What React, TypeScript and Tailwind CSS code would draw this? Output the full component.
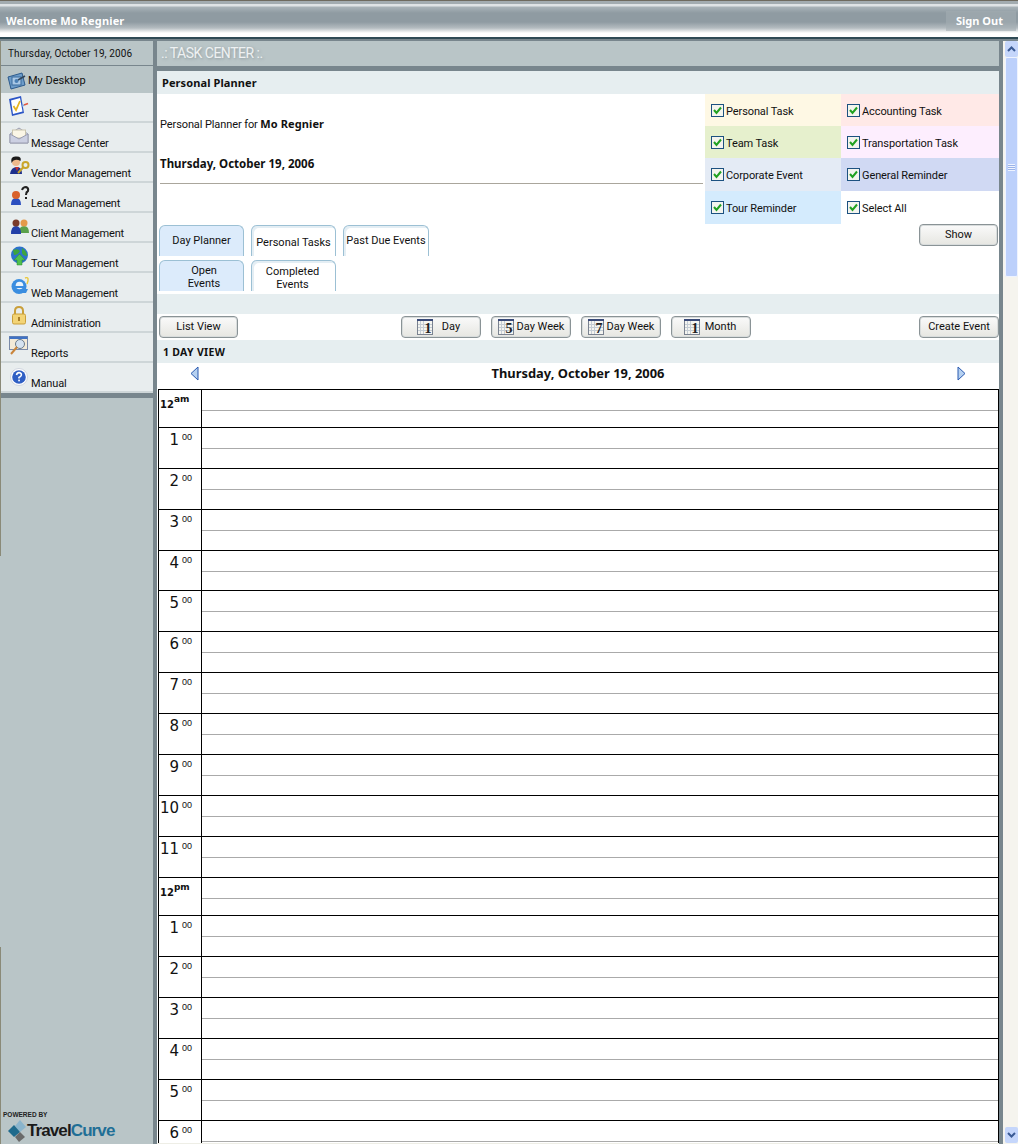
import React from 'react';

// Icons for the left menu
const DesktopIcon = () => (
  <svg width="20" height="20" viewBox="0 0 20 20">
    <path d="M1 6 L15 2 L18 14 L4 18 Z" fill="#6d9cc9" stroke="#2c5a8c" />
    <rect x="5" y="6" width="9" height="8" fill="#a9c8e6" stroke="#3a6a9c" />
    <circle cx="9.5" cy="10" r="2" fill="#4a7fb4" />
    <path d="M11 9 L18 5" stroke="#33465a" strokeWidth="1.5" />
  </svg>
);
const TaskIcon = () => (
  <svg width="22" height="22" viewBox="0 0 22 22">
    <path d="M1 3 L13 0 L16 17 L4 20 Z" fill="#2b55c6" />
    <path d="M3 4.5 L12 2 L14.5 15.5 L5 18 Z" fill="#fff" />
    <path d="M5.5 10 L8 14 L12 5" fill="none" stroke="#e6b422" strokeWidth="1.8" />
    <path d="M16 9 L20 7.5" stroke="#e2583e" strokeWidth="1.5" />
    <path d="M14 10 L16 9" stroke="#7fa8e0" strokeWidth="1.5" />
  </svg>
);
const MailIcon = () => (
  <svg width="20" height="18" viewBox="0 0 20 18">
    <path d="M1 7 L10 1 L19 7 V16 H1 Z" fill="#dfe2ea" stroke="#9a9db0" />
    <rect x="3.5" y="3" width="13" height="8" fill="#fbf6e6" stroke="#c9c4ae" />
    <path d="M1 7 L10 12 L19 7 V16 H1 Z" fill="#ccd0e2" stroke="#9a9db0" />
  </svg>
);
const VendorIcon = () => (
  <svg width="21" height="20" viewBox="0 0 21 20">
    <path d="M1 18 Q2 11 8 11 Q13 11 13 18 Z" fill="#1c2f8c" />
    <path d="M6 11 L8 15 L10 11 Z" fill="#c23030" />
    <circle cx="7" cy="6" r="4" fill="#eeb98c" />
    <path d="M2.5 7 Q1 0 7 0.5 Q13 0 11.5 5 Q8 3 6 4 Q4 4 2.5 7 Z" fill="#1a1a1a" />
    <circle cx="16.5" cy="9" r="3" fill="none" stroke="#c9a52a" strokeWidth="2" />
    <path d="M14.5 11 L9 17" stroke="#c9a52a" strokeWidth="2" />
  </svg>
);
const LeadIcon = () => (
  <svg width="20" height="20" viewBox="0 0 20 20">
    <path d="M1 19 Q1 12 6 12 Q11 12 11 19 Z" fill="#2b4fc0" />
    <circle cx="6" cy="9" r="4" fill="#d9622c" />
    <path d="M12 4 Q13 1 16 1 Q19 2 18 5 Q16 6 16 9" fill="none" stroke="#222" strokeWidth="2" />
    <rect x="15" y="11" width="2" height="2" fill="#222" />
  </svg>
);
const ClientIcon = () => (
  <svg width="20" height="16" viewBox="0 0 20 16">
    <path d="M9 15 Q9 8 14 8 Q19 8 19 15 Z" fill="#5aa04a" />
    <circle cx="14" cy="5" r="3.5" fill="#e39a4a" />
    <path d="M1 16 Q1 8 6 8 Q11 8 11 16 Z" fill="#2340a8" />
    <circle cx="6" cy="5" r="3.5" fill="#7a3a2a" />
  </svg>
);
const GlobeIcon = () => (
  <svg width="19" height="20" viewBox="0 0 19 20">
    <circle cx="9.5" cy="9" r="8.5" fill="#2d72cc" />
    <path d="M3 4 Q8 2 10 5 Q8 9 4 9 Z M12 2 Q17 5 17 10 Q13 10 12 7 Z" fill="#3da43d" />
    <path d="M9.5 8 L15 14 H12 V19 H7 V14 H4 Z" fill="#4fc04f" stroke="#2a8a2a" strokeWidth="0.5" />
  </svg>
);
const IeIcon = () => (
  <svg width="20" height="19" viewBox="0 0 20 19">
    <path d="M15 2 Q20 0 17 8" fill="none" stroke="#e9c83a" strokeWidth="1.4" />
    <circle cx="9" cy="10.5" r="7.5" fill="#3b8ee0" />
    <circle cx="9.5" cy="9.5" r="3.8" fill="#eaf4fc" />
    <rect x="4" y="10" width="12" height="2" fill="#3b8ee0" />
    <path d="M11 13 L18 13 L16 17 L9 17 Z" fill="#3b8ee0" />
  </svg>
);
const LockIcon = () => (
  <svg width="16" height="19" viewBox="0 0 16 19">
    <path d="M4 9 V5 Q4 1 8 1 Q12 1 12 5 V9" fill="none" stroke="#c99f3a" strokeWidth="2" />
    <rect x="1.5" y="8" width="13" height="10" rx="1.5" fill="#f3d476" stroke="#c99f3a" />
    <rect x="7" y="11" width="2" height="4" fill="#a87f2a" />
  </svg>
);
const ReportIcon = () => (
  <svg width="20" height="19" viewBox="0 0 20 19">
    <rect x="0.5" y="0.5" width="18" height="13" fill="#f3ead8" stroke="#7a8aa8" />
    <rect x="0.5" y="0.5" width="18" height="2.5" fill="#3f72c4" />
    <circle cx="11" cy="8" r="4.5" fill="#d5e2f0" stroke="#6a7a8a" />
    <path d="M8 11 L2 18" stroke="#c9843a" strokeWidth="2" />
  </svg>
);
const HelpIcon = () => (
  <svg width="18" height="18" viewBox="0 0 18 18">
    <circle cx="9" cy="9" r="8.5" fill="#fff" stroke="#cfd4de" />
    <circle cx="9" cy="9" r="6.8" fill="#2f5fc4" />
    <path d="M6.5 7 Q7 4.5 9.2 4.6 Q11.8 5 11.3 7.2 Q10.8 8.4 9 9.4 V10.6" fill="none" stroke="#fff" strokeWidth="1.6" />
    <rect x="8.2" y="11.6" width="1.7" height="1.7" fill="#fff" />
  </svg>
);

const menu = [
  { label: 'Task Center', icon: <TaskIcon />, pad: 'pl-[7px] pt-[3px]', gap: 'ml-[2px]' },
  { label: 'Message Center', icon: <MailIcon />, pad: 'pl-[8px] pt-[4px]', gap: 'ml-[2px]' },
  { label: 'Vendor Management', icon: <VendorIcon />, pad: 'pl-[8px] pt-[3px]', gap: 'ml-[1px]' },
  { label: 'Lead Management', icon: <LeadIcon />, pad: 'pl-[9px] pt-[3px]', gap: 'ml-[1px]' },
  { label: 'Client Management', icon: <ClientIcon />, pad: 'pl-[9px] pt-[5px]', gap: 'ml-[1px]' },
  { label: 'Tour Management', icon: <GlobeIcon />, pad: 'pl-[9px] pt-[3px]', gap: 'ml-[2px]' },
  { label: 'Web Management', icon: <IeIcon />, pad: 'pl-[9px] pt-[3px]', gap: 'ml-[1px]' },
  { label: 'Administration', icon: <LockIcon />, pad: 'pl-[10px] pt-[3px]', gap: 'ml-[4px]' },
  { label: 'Reports', icon: <ReportIcon />, pad: 'pl-[8px] pt-[3px]', gap: 'ml-[2px]' },
  { label: 'Manual', icon: <HelpIcon />, pad: 'pl-[9px] pt-[5px]', gap: 'ml-[3px]' },
];

const Check = ({ label, bg }: { label: string; bg: string }) => (
  <div className={`flex h-full items-start pl-[6px] ${bg}`}>
    <span className="mr-[2px] mt-[10px] flex h-[13px] w-[13px] shrink-0 items-center justify-center border border-[#1c5180] bg-[#f4f4ee]">
      <svg width="9" height="9" viewBox="0 0 9 9">
        <path d="M1 4 L3.5 7 L8 1.5" fill="none" stroke="#21a121" strokeWidth="2" />
      </svg>
    </span>
    <span className="mt-[10px] tracking-[-0.1px]">{label}</span>
  </div>
);

const Tab = ({ children, w, active, pt }: { children: React.ReactNode; w: string; active?: boolean; pt: string }) => (
  <div className={`${w} h-[31px] rounded-t-[6px] border-x border-t border-[#9cc0d4] text-center leading-[13px] ${pt} ${active ? 'bg-[#dcebfb]' : 'bg-white shadow-[inset_2px_2px_0_#e4eef4]'}`}>
    {children}
  </div>
);

const Btn = ({ children, w, extra = '' }: { children: React.ReactNode; w: string; extra?: string }) => (
  <div className={`${w} ${extra} flex h-[22px] items-center justify-center rounded-[4px] border border-[#8a9396] bg-[linear-gradient(#fafafa,#e6e6e1)] shadow-[inset_0_0_0_1px_#d8dcdc]`}>
    {children}
  </div>
);

const CalIcon = ({ n }: { n: string }) => (
  <svg width="16" height="16" viewBox="0 0 16 16" className="shrink-0">
    <rect x="0.5" y="0.5" width="15" height="15" fill="#f4f4f0" stroke="#7a8290" />
    <rect x="0" y="0" width="16" height="2" fill="#3a4a78" />
    <path d="M1 5.5 H15 M1 8.5 H15 M1 11.5 H15 M3.5 2 V15 M6.5 2 V15" stroke="#c4ccd4" fill="none" />
    <text x="11" y="14" textAnchor="middle" fontFamily="Liberation Serif, serif" fontSize="14" fontWeight="700" fill="#222">{n}</text>
  </svg>
);

const CalBtn = ({ n, label, iconGap, extra }: { n: string; label: string; iconGap: string; extra?: string }) => (
  <Btn w="w-[80px]" extra={extra}>
    <CalIcon n={n} />
    <span className={iconGap}>{label}</span>
  </Btn>
);

const hours = [
  { h: '12', sup: 'am', height: 'h-[38px]' },
  { h: '1', sup: '00', height: 'h-[41px]' },
  { h: '2', sup: '00', height: 'h-[41px]' },
  { h: '3', sup: '00', height: 'h-[41px]' },
  { h: '4', sup: '00', height: 'h-[40px]' },
  { h: '5', sup: '00', height: 'h-[41px]' },
  { h: '6', sup: '00', height: 'h-[41px]' },
  { h: '7', sup: '00', height: 'h-[41px]' },
  { h: '8', sup: '00', height: 'h-[41px]' },
  { h: '9', sup: '00', height: 'h-[41px]' },
  { h: '10', sup: '00', height: 'h-[41px]' },
  { h: '11', sup: '00', height: 'h-[41px]' },
  { h: '12', sup: 'pm', height: 'h-[38px]' },
  { h: '1', sup: '00', height: 'h-[41px]' },
  { h: '2', sup: '00', height: 'h-[41px]' },
  { h: '3', sup: '00', height: 'h-[41px]' },
  { h: '4', sup: '00', height: 'h-[41px]' },
  { h: '5', sup: '00', height: 'h-[41px]' },
  { h: '6', sup: '00', height: 'h-[41px]' },
];

const HourRow = ({ h, sup, height }: { h: string; sup: string; height: string }) => (
  <div className={`flex ${height} shrink-0 border-t border-black`}>
    {sup === '00' ? (
      <div className="flex w-[43px] shrink-0 justify-end border-r border-black pr-[9px] pt-[5px] font-['DejaVu_Sans',sans-serif] leading-none">
        <span className="text-[15px]">{h}</span>
        <span className="ml-[3px] font-['Liberation_Sans',sans-serif] text-[9px]">{sup}</span>
      </div>
    ) : (
      <div className="flex w-[43px] shrink-0 border-r border-black pl-[1px] pt-[5px] font-['DejaVu_Sans',sans-serif] font-bold leading-none">
        <span className="mt-[5px] text-[10px]">{h}</span>
        <span className="text-[9px]">{sup}</span>
      </div>
    )}
    <div className="flex-1">
      <div className="h-[21px] border-b border-[#aaaaaa]" />
    </div>
  </div>
);

export default function App() {
  return (
    <div className="flex h-[1144px] w-[1018px] flex-col overflow-hidden bg-[#78868d] font-['Roboto',sans-serif] text-[11px] text-[#111]">
      {/* top bar */}
      <div className="flex h-[39px] shrink-0 items-center justify-between border-b-2 border-[#2f4a55] bg-[linear-gradient(#6e6a5e_0,#6e6a5e_1px,#a3acb0_1px,#a3acb0_4px,#dfe3e5_4px,#dfe3e5_6px,#a9b3b8_7px,#8f9ba2_13px,#8f9ba2_22px,#b4bcc0_28px,#ffffff_33px,#ffffff_37px)] pl-[6px] font-['Noto_Sans',sans-serif] font-bold text-white">
        <span className="mt-[5px] text-[11px] tracking-[0.15px]">Welcome Mo Regnier</span>
        <span className="mr-[2px] mt-[5px] flex h-[20px] w-[70px] items-center bg-[#a3adb2]/60 pl-[10px] text-[11px]">Sign Out</span>
      </div>

      <div className="flex min-h-0 flex-1 pt-[2px]">
        {/* left menu */}
        <div className="flex w-px shrink-0 flex-col">
          <div className="h-[515px] bg-[#8a8a78]" />
          <div className="h-[391px] bg-[#b9c5c7]" />
          <div className="flex-1 bg-[#8a8a78]" />
        </div>
        <div className="flex w-[152px] shrink-0 flex-col bg-[#b9c5c7]">
          <div className="flex h-[25px] shrink-0 items-center border-b border-[#78868d] pl-[7px] text-[10px] tracking-[0.12px]">Thursday, October 19, 2006</div>
          <div className="flex h-[27px] shrink-0 items-center gap-[1px] pl-[6px]">
            <div className="mt-[2px]">
              <DesktopIcon />
            </div>
            <span className="mt-[4px] text-[11px]">My Desktop</span>
          </div>
          {menu.map((m) => (
            <div key={m.label} className={`flex h-[30px] shrink-0 border-b-2 border-[#ced6d8] bg-[#e8edee] ${m.pad}`}>
              <div className="self-start">{m.icon}</div>
              <span className={`mt-auto mb-[-1px] text-[11px] tracking-[-0.15px] ${m.gap}`}>{m.label}</span>
            </div>
          ))}
          <div className="h-[5px] shrink-0 bg-[#78868d]" />
          <div className="mt-auto pb-[2px] pl-[2px]">
            <div className="mb-[1px] font-['Liberation_Sans',sans-serif] text-[6.5px] font-bold leading-[8px] text-[#222]">POWERED BY</div>
            <div className="flex items-center">
              <svg width="20" height="22" viewBox="0 0 20 22" className="ml-[4px]">
                <path d="M13 0 L19 7 L13 12 L8 6 Z" fill="#8ab4cc" />
                <path d="M7 5 L13 12 L7 17 L1 11 Z" fill="#1f6a8c" />
                <path d="M13 12 L18 17 L12 22 L8 17 Z" fill="#6a6a6a" />
              </svg>
              <span className="font-['Liberation_Sans',sans-serif] text-[17px] font-bold leading-[18px] tracking-[-0.9px] text-[#1a1a1a]">
                Travel<span className="text-[#1f6f96]">Curve</span>
              </span>
            </div>
          </div>
        </div>

        {/* main column */}
        <div className="ml-[4px] flex w-[842px] shrink-0 flex-col overflow-hidden">
          <div className="flex h-[25px] shrink-0 items-center bg-[#b9c5c7] pl-[4px] font-['Roboto',sans-serif] text-[14px] tracking-[-0.5px] text-[#eef1f2] [text-shadow:1px_1px_3px_#8a969a]">
            .: TASK CENTER :.
          </div>
          <div className="h-[5px] shrink-0" />
          <div className="flex min-h-0 flex-1 flex-col bg-white">
            <div className="flex h-[23px] shrink-0 items-center bg-[#e6eef0] pl-[5px] pt-[1px] font-['Noto_Sans',sans-serif] text-[11px] font-bold tracking-[0.1px]">Personal Planner</div>

            <div className="flex shrink-0">
              <div className="flex w-[548px] shrink-0 flex-col pl-[3px]">
                <div className="pt-[22px] leading-[15px] tracking-[-0.1px]">
                  Personal Planner for <b className="font-['Noto_Sans',sans-serif] tracking-[0.1px]">Mo Regnier</b>
                </div>
                <div className="pt-[24px] font-['Noto_Sans',sans-serif] text-[11.5px] font-bold leading-[15px]">Thursday, October 19, 2006</div>
                <div className="mr-[2px] mt-[12px] border-t border-[#aaa69c]" />
                <div className="ml-[-1px] mt-[41px] flex gap-[7px]">
                  <Tab w="w-[85px]" active pt="pt-[8px]">Day Planner</Tab>
                  <Tab w="w-[85px]" pt="pt-[10px]">Personal Tasks</Tab>
                  <Tab w="w-[86px]" pt="pt-[8px]">Past Due Events</Tab>
                </div>
                <div className="ml-[-1px] mt-[4px] flex gap-[7px]">
                  <Tab w="w-[85px]" active pt="pl-[5px] pt-[3px]"><span className="block">Open</span><span className="block">Events</span></Tab>
                  <Tab w="w-[85px]" pt="pr-[2px] pt-[4px]"><span className="block">Completed</span><span className="block">Events</span></Tab>
                </div>
              </div>
              <div className="flex w-[294px] shrink-0 flex-col">
                <div className="grid h-[130px] grid-cols-[136px_158px] grid-rows-[32px_32px_33px_33px]">
                  <Check label="Personal Task" bg="bg-[#fef8e4]" />
                  <Check label="Accounting Task" bg="bg-[#ffe9e7]" />
                  <Check label="Team Task" bg="bg-[#e6f0cd]" />
                  <Check label="Transportation Task" bg="bg-[#fdeefe]" />
                  <Check label="Corporate Event" bg="bg-[#e4ebf5]" />
                  <Check label="General Reminder" bg="bg-[#d0d9f3]" />
                  <Check label="Tour Reminder" bg="bg-[#d4ebfd]" />
                  <Check label="Select All" bg="bg-white" />
                </div>
                <div className="flex justify-end pr-[1px]">
                  <Btn w="w-[79px]" extra="pt-[1px]">Show</Btn>
                </div>
              </div>
            </div>

            <div className="mt-[3px] h-[20px] shrink-0 bg-[#e6eef0]" />

            <div className="flex h-[26px] shrink-0 items-center pl-[2px]">
              <Btn w="w-[79px]" extra="pt-[1px]">List View</Btn>
              <div className="ml-[163px] flex gap-[10px]">
                <CalBtn n="1" label="Day" iconGap="ml-[9px]" extra="pr-[5px]" />
                <CalBtn n="5" label="Day Week" iconGap="ml-[3px]" />
                <CalBtn n="7" label="Day Week" iconGap="ml-[3px]" />
                <CalBtn n="1" label="Month" iconGap="ml-[5px]" extra="pr-[2px]" />
              </div>
              <div className="ml-auto">
                <Btn w="w-[80px]" extra="pt-[1px]">Create Event</Btn>
              </div>
            </div>

            <div className="flex h-[23px] shrink-0 items-center bg-[#e6eef0] pl-[6px] pt-[3px] font-['Noto_Sans',sans-serif] text-[10.5px] font-bold tracking-[0.3px]">1 DAY VIEW</div>

            <div className="flex h-[26px] shrink-0 items-center justify-between pb-[6px] pl-[33px] pr-[33px]">
              <svg width="9" height="15" viewBox="0 0 9 15">
                <path d="M8 1 L1 7.5 L8 14 Z" fill="#b5d0f0" stroke="#2a5ab0" />
              </svg>
              <span className="font-['Noto_Sans',sans-serif] text-[12.9px] font-bold leading-none">Thursday, October 19, 2006</span>
              <svg width="9" height="15" viewBox="0 0 9 15">
                <path d="M1 1 L8 7.5 L1 14 Z" fill="#b5d0f0" stroke="#2a5ab0" />
              </svg>
            </div>

            <div className="ml-[1px] flex flex-col border-l border-r border-black">
              {hours.map((r, i) => (
                <HourRow key={i} {...r} />
              ))}
            </div>
          </div>
          <div className="h-px shrink-0 bg-[#eeeee6]" />
        </div>

        {/* scrollbar */}
        <div className="ml-[4px] flex w-[15px] shrink-0 flex-col bg-[#f5f4ee] pl-[2px]">
          <div className="flex h-[16px] shrink-0 items-center justify-center rounded-[2px] bg-[#c5d6fb]">
            <svg width="9" height="6" viewBox="0 0 9 6">
              <path d="M1 5 L4.5 1.5 L8 5" fill="none" stroke="#3a5a94" strokeWidth="2" />
            </svg>
          </div>
          <div className="flex h-[220px] shrink-0 items-center justify-center rounded-[2px] border border-[#eef3ff] bg-[#bcd0fb]">
            <div className="h-[7px] w-[7px] bg-[linear-gradient(#eef3ff_1px,#9ab3e8_1px,#9ab3e8_2px,#eef3ff_2px,#eef3ff_3px,#9ab3e8_3px,#9ab3e8_4px,#eef3ff_4px,#eef3ff_5px,#9ab3e8_5px,#9ab3e8_6px,#eef3ff_6px)]" />
          </div>
          <div className="mt-auto mb-[1px] flex h-[16px] shrink-0 items-center justify-center rounded-[2px] bg-[#c5d6fb]">
            <svg width="9" height="6" viewBox="0 0 9 6">
              <path d="M1 1 L4.5 4.5 L8 1" fill="none" stroke="#3a5a94" strokeWidth="2" />
            </svg>
          </div>
        </div>
      </div>
    </div>
  );
}
